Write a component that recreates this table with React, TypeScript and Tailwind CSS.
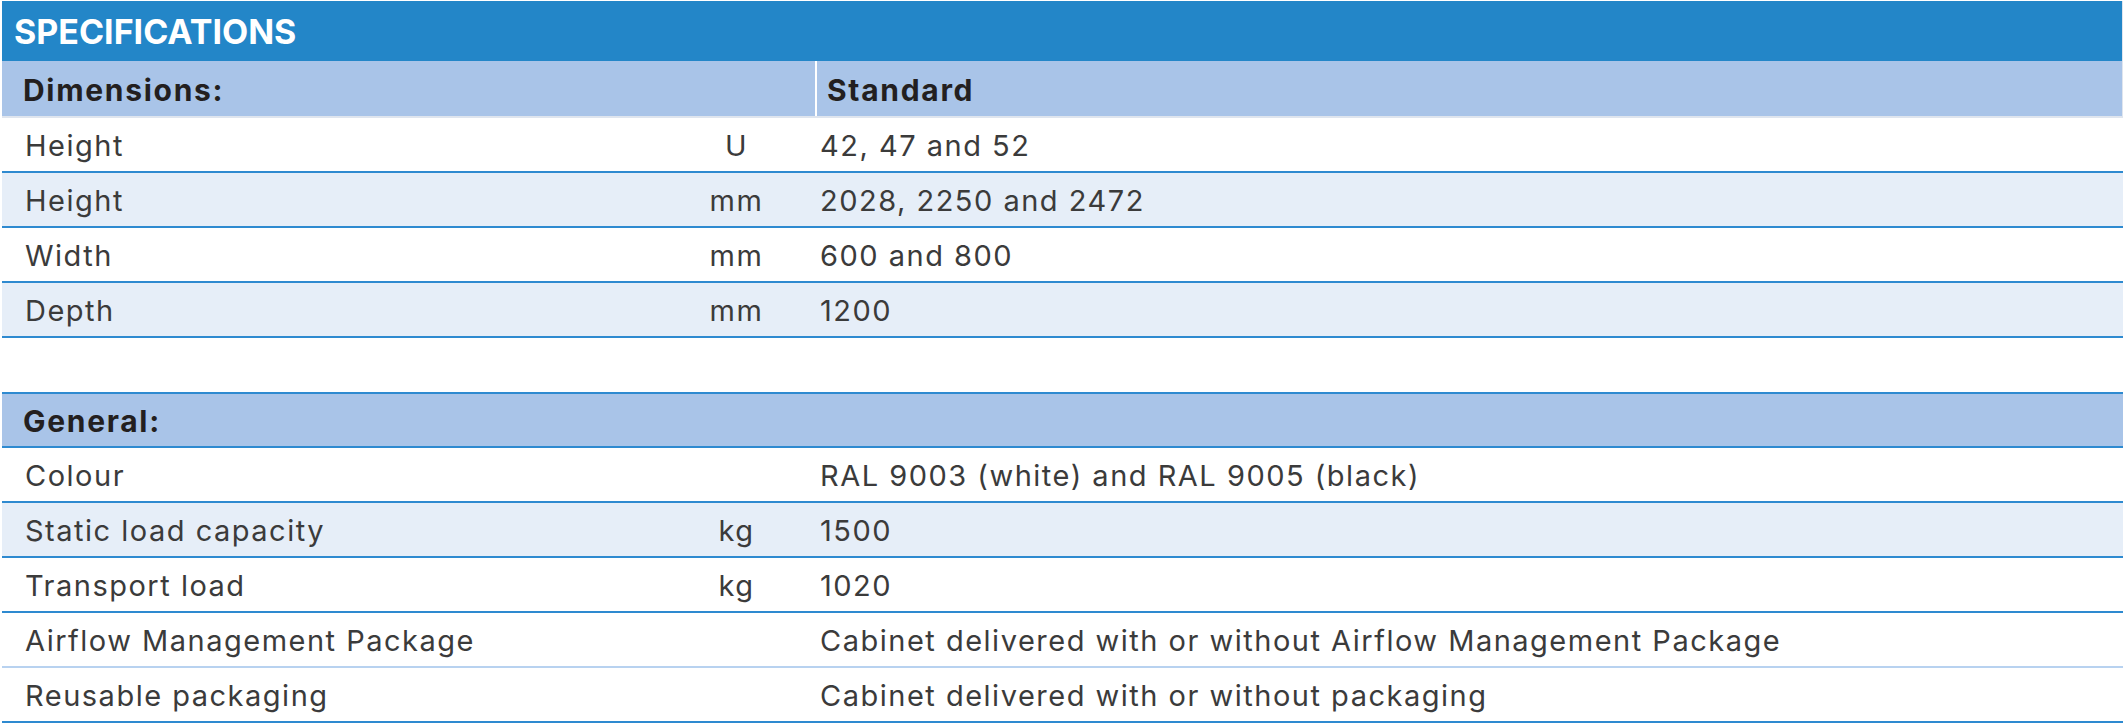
const LINE = "border-b-2 border-[#2e8ad0]";

type Row = {
  label: string;
  unit?: string;
  value: string;
  shaded?: boolean;
  soft?: boolean;
};

const dimensions: Row[] = [
  { label: "Height", unit: "U", value: "42, 47 and 52" },
  { label: "Height", unit: "mm", value: "2028, 2250 and 2472", shaded: true },
  { label: "Width", unit: "mm", value: "600 and 800" },
  { label: "Depth", unit: "mm", value: "1200", shaded: true },
];

const general: Row[] = [
  { label: "Colour", value: "RAL 9003 (white) and RAL 9005 (black)" },
  { label: "Static load capacity", unit: "kg", value: "1500", shaded: true },
  { label: "Transport load", unit: "kg", value: "1020" },
  {
    label: "Airflow Management Package",
    value: "Cabinet delivered with or without Airflow Management Package",
    soft: true,
  },
  { label: "Reusable packaging", value: "Cabinet delivered with or without packaging" },
];

function SpecRow({ row }: { row: Row }) {
  return (
    <div
      className={`grid h-[55px] grid-cols-[656px_157px_1fr] items-center pt-[3px] text-[29px] tracking-[1.5px] text-[#3b3b3b] ${
        row.shaded ? "bg-[#e6eef8]" : "bg-white"
      } ${row.soft ? "border-b-2 border-[#b8d2f0]" : LINE}`}
    >
      <span className="pl-[23px]">{row.label}</span>
      <span className="text-center">{row.unit}</span>
      <span className="pl-[5px]">{row.value}</span>
    </div>
  );
}

export default function App() {
  return (
    <div
      className="min-h-screen bg-white pl-[2px] pt-[1px]"
      style={{ fontFamily: 'Inter, "Liberation Sans", Arial, sans-serif' }}
    >
      <div className="w-[2121px]">
        <div className="flex h-[60px] items-center border-r border-[#dfe5ee] bg-[#2386c8] pl-[12px] text-[34px] font-bold text-white">
          SPECIFICATIONS
        </div>

        <div
          className={`grid h-[57px] grid-cols-[813px_1fr] border-r border-[#dfe5ee] bg-[#a9c4e8] text-[30px] font-bold tracking-[1.7px] text-[#231f20] ${LINE}`}
        >
          <span className="flex items-center pl-[21px] pt-[3px]">Dimensions:</span>
          <span className="flex items-center border-l-2 border-white pl-[10px] pt-[3px]">
            Standard
          </span>
        </div>
        {dimensions.map((r, i) => (
          <SpecRow key={i} row={r} />
        ))}

        <div className="h-[54px]" />

        <div
          className={`flex h-[56px] items-center border-t-2 border-[#2e8ad0] bg-[#a9c4e8] pl-[21px] pt-[3px] text-[30px] font-bold tracking-[1.7px] text-[#231f20] ${LINE}`}
        >
          General:
        </div>
        {general.map((r, i) => (
          <SpecRow key={i} row={r} />
        ))}
      </div>
    </div>
  );
}
